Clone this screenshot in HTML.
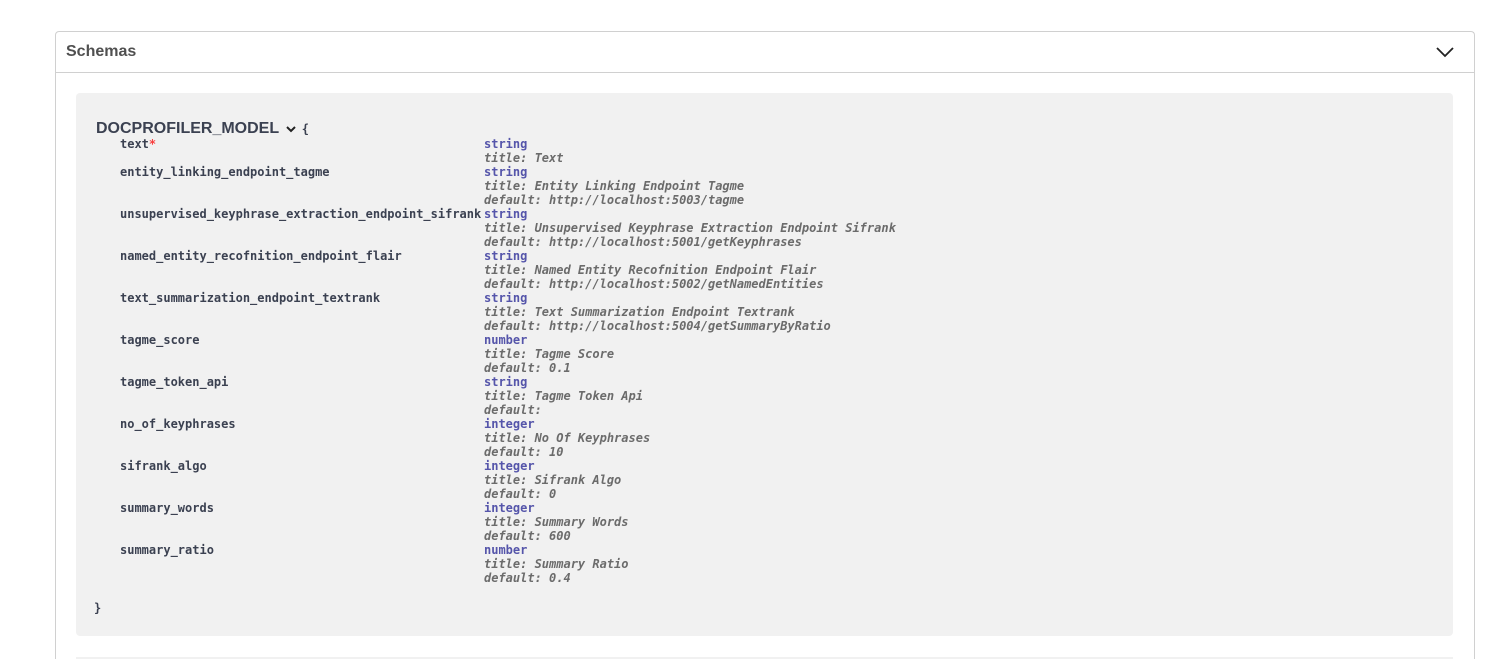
<!DOCTYPE html>
<html style="height:659px;overflow:hidden"><head><style>
html,body{margin:0;width:1511px;height:659px;overflow:hidden;background:#fff;font-family:"Liberation Sans",sans-serif;}
.outer{position:absolute;left:55px;top:31px;width:1418px;height:627px;border:1px solid #d0d0d0;border-bottom:none;border-radius:4px 4px 0 0;}
.hdr{position:absolute;left:0;top:0;width:1418px;height:40px;border-bottom:1px solid #d0d0d0;}
.hdr span{position:absolute;left:10px;top:11px;font-size:16px;font-weight:bold;color:#505050;}
.box{position:absolute;left:76px;top:93px;width:1377px;height:543px;background:#f1f1f1;border-radius:4px;}
.box2{position:absolute;left:76px;top:657px;width:1377px;height:2px;background:#f1f1f1;}
.title{position:absolute;left:96px;top:120px;font-size:16px;font-weight:bold;color:#3b4151;}
.m{position:absolute;font-family:"DejaVu Sans Mono",monospace;font-size:12px;font-weight:600;line-height:14px;white-space:pre;color:#3b4151;}
.t{color:#55a;}
.f{color:#6b6b6b;font-style:italic;}
</style></head><body>
<div class="outer"><div class="hdr"><span>Schemas</span>
<svg style="position:absolute;left:1380px;top:14px" width="18" height="12" viewBox="0 0 18 12"><path d="M1 2 L9 10 L17 2" fill="none" stroke="#222" stroke-width="1.8"/></svg></div></div>
<div class="box"></div>
<div class="box2"></div>
<div class="title">DOCPROFILER_MODEL <svg width="12" height="10" viewBox="0 0 12 10" style="vertical-align:-1px;margin-left:2px"><path d="M2 3 L6 7 L10 3" fill="none" stroke="#222" stroke-width="2"/></svg> <span style="font-family:'DejaVu Sans Mono',monospace;font-size:12px">{</span></div>
<div class="m" style="left:120px;top:137px">text<span style="color:#f93e3e">*</span></div>
<div class="m" style="left:484px;top:137px"><span class="t">string</span>
<span class="f">title: Text</span></div>
<div class="m" style="left:120px;top:165px">entity_linking_endpoint_tagme</div>
<div class="m" style="left:484px;top:165px"><span class="t">string</span>
<span class="f">title: Entity Linking Endpoint Tagme
default: http://localhost:5003/tagme</span></div>
<div class="m" style="left:120px;top:207px">unsupervised_keyphrase_extraction_endpoint_sifrank</div>
<div class="m" style="left:484px;top:207px"><span class="t">string</span>
<span class="f">title: Unsupervised Keyphrase Extraction Endpoint Sifrank
default: http://localhost:5001/getKeyphrases</span></div>
<div class="m" style="left:120px;top:249px">named_entity_recofnition_endpoint_flair</div>
<div class="m" style="left:484px;top:249px"><span class="t">string</span>
<span class="f">title: Named Entity Recofnition Endpoint Flair
default: http://localhost:5002/getNamedEntities</span></div>
<div class="m" style="left:120px;top:291px">text_summarization_endpoint_textrank</div>
<div class="m" style="left:484px;top:291px"><span class="t">string</span>
<span class="f">title: Text Summarization Endpoint Textrank
default: http://localhost:5004/getSummaryByRatio</span></div>
<div class="m" style="left:120px;top:333px">tagme_score</div>
<div class="m" style="left:484px;top:333px"><span class="t">number</span>
<span class="f">title: Tagme Score
default: 0.1</span></div>
<div class="m" style="left:120px;top:375px">tagme_token_api</div>
<div class="m" style="left:484px;top:375px"><span class="t">string</span>
<span class="f">title: Tagme Token Api
default:</span></div>
<div class="m" style="left:120px;top:417px">no_of_keyphrases</div>
<div class="m" style="left:484px;top:417px"><span class="t">integer</span>
<span class="f">title: No Of Keyphrases
default: 10</span></div>
<div class="m" style="left:120px;top:459px">sifrank_algo</div>
<div class="m" style="left:484px;top:459px"><span class="t">integer</span>
<span class="f">title: Sifrank Algo
default: 0</span></div>
<div class="m" style="left:120px;top:501px">summary_words</div>
<div class="m" style="left:484px;top:501px"><span class="t">integer</span>
<span class="f">title: Summary Words
default: 600</span></div>
<div class="m" style="left:120px;top:543px">summary_ratio</div>
<div class="m" style="left:484px;top:543px"><span class="t">number</span>
<span class="f">title: Summary Ratio
default: 0.4</span></div>
<div class="m" style="left:94px;top:601px">}</div>
</body></html>
